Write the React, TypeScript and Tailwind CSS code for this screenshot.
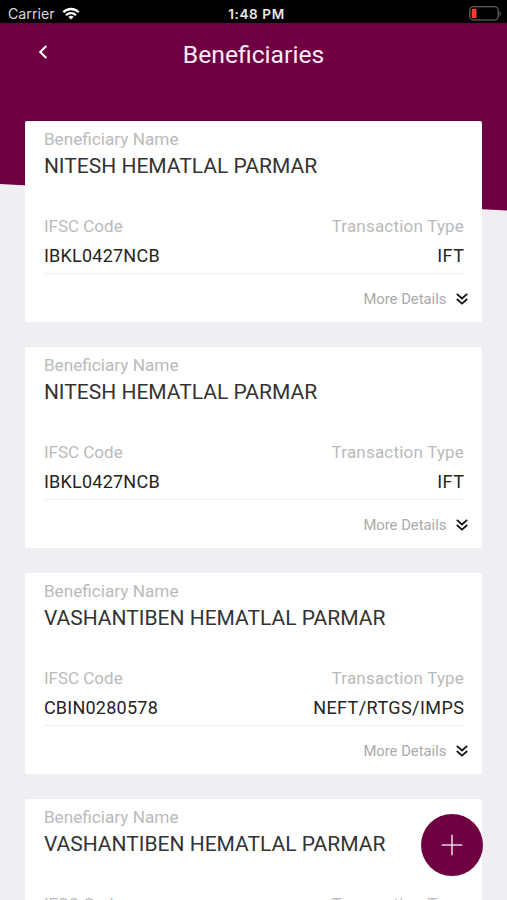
type Beneficiary = { name: string; ifsc: string; type: string };

const beneficiaries: Beneficiary[] = [
  { name: 'NITESH HEMATLAL PARMAR', ifsc: 'IBKL0427NCB', type: 'IFT' },
  { name: 'NITESH HEMATLAL PARMAR', ifsc: 'IBKL0427NCB', type: 'IFT' },
  { name: 'VASHANTIBEN HEMATLAL PARMAR', ifsc: 'CBIN0280578', type: 'NEFT/RTGS/IMPS' },
  { name: 'VASHANTIBEN HEMATLAL PARMAR', ifsc: 'CBIN0280578', type: 'NEFT/RTGS/IMPS' },
];

function StatusBar() {
  return (
    <div className="grid h-[23px] grid-cols-3 items-center bg-black pt-1 pr-[6px] pl-[8px] font-['Inter',sans-serif] text-white">
      <div className="flex items-center gap-[7px]">
        <span className="text-[14.2px] leading-[18px] text-[#d8d8d8]">Carrier</span>
        <svg width="18" height="13" viewBox="0 0 18 13" fill="none" stroke="white" strokeWidth="2.3">
          <path d="M1.3 5.2a10.9 10.9 0 0 1 15.4 0" />
          <path d="M4 8.2a7.1 7.1 0 0 1 10 0" />
          <path d="M9 12.6 6.4 10a3.7 3.7 0 0 1 5.2 0Z" fill="white" stroke="none" />
        </svg>
      </div>
      <span className="pl-1 text-center text-[13.5px] leading-[18px] font-semibold tracking-[0.6px] whitespace-nowrap text-[#e8e8e8]">1:48 PM</span>
      <svg className="-mt-px justify-self-end" width="32" height="15" viewBox="0 0 32 15" fill="none">
        <rect x="0.8" y="0.8" width="28.4" height="13.2" rx="3.6" stroke="#777" strokeWidth="1.1" />
        <rect x="2.7" y="2.7" width="4.8" height="9.4" rx="1.2" fill="#ff3b30" />
        <path d="M30.6 5v4.8c1.4-.7 1.4-4.1 0-4.8Z" fill="#777" />
      </svg>
    </div>
  );
}

function Header() {
  return (
    <header className="grid h-[98px] grid-cols-[60px_1fr_60px] items-start">
      <button className="mt-[22px] ml-[37px] w-[12px]" aria-label="Back">
        <svg width="12" height="14" viewBox="0 0 12 14" fill="none" stroke="white" strokeWidth="2">
          <path d="M9.3 1 3.2 7l6.1 6" />
        </svg>
      </button>
      <h1 className="mt-[17px] text-center text-[24.7px] leading-[30px] text-[#ffeaf8]">Beneficiaries</h1>
    </header>
  );
}

function Card({ item }: { item: Beneficiary }) {
  return (
    <article className="h-[201px] shrink-0 rounded-[2px] bg-white pt-[8px] pr-[18.5px] pl-[18.5px]">
      <p className="text-[17.2px] leading-5 text-[#bababa]">Beneficiary Name</p>
      <h2 className="mt-[5px] text-[21px] leading-6 text-[#333]">{item.name}</h2>
      <div className="mt-[38px] flex justify-between text-[17px] leading-5 text-[#bababa]">
        <span>IFSC Code</span>
        <span className="-mr-[0.2px] tracking-[0.2px]">Transaction Type</span>
      </div>
      <div className="mt-[9px] flex h-[29px] justify-between border-b border-[#efefef] text-[18px] leading-[22px] text-[#242424]">
        <span className="tracking-[0.24px]">{item.ifsc}</span>
        <span className="-mr-[0.4px] tracking-[0.42px]">{item.type}</span>
      </div>
      <div className="mt-[15px] -mr-1 flex items-center justify-end gap-[9.5px]">
        <span className="text-[14.8px] leading-5 text-[#aaa]">More Details</span>
        <svg width="12" height="12" viewBox="0 0 12 12" fill="none" stroke="#111" strokeWidth="1.7">
          <path d="m.8.9 5.2 4.6L11.2.9M.8 6l5.2 4.7L11.2 6" />
        </svg>
      </div>
    </article>
  );
}

export default function App() {
  return (
    <div className="relative h-[900px] w-[507px] overflow-hidden bg-[#efeef3] font-['Roboto',sans-serif]">
      <div className="absolute inset-x-0 top-0 h-[211px] bg-[#6e0042] [clip-path:polygon(0_0,100%_0,100%_210.5px,0_184px)]" />
      <div className="relative">
        <StatusBar />
        <Header />
        <main className="flex flex-col gap-[25px] pr-[24.6px] pl-[25.4px]">
          {beneficiaries.map((item, i) => (
            <Card key={i} item={item} />
          ))}
        </main>
      </div>
      <button aria-label="Add beneficiary" className="absolute top-[814px] left-[421px] flex size-[62px] items-center justify-center rounded-full bg-[#6e0042]">
        <svg width="22" height="22" viewBox="0 0 22 22" stroke="#ecd0e2" strokeWidth="1.6">
          <path d="M11 .7v20.6M.7 11h20.6" />
        </svg>
      </button>
    </div>
  );
}
